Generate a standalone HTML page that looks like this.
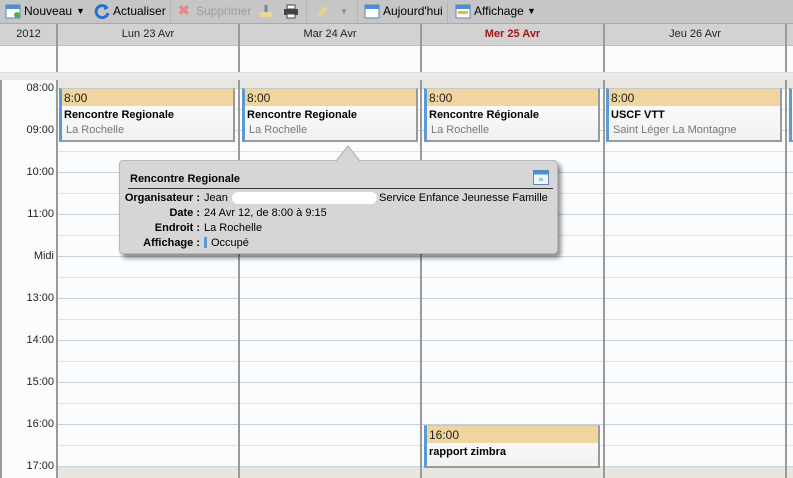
<!DOCTYPE html>
<html><head><meta charset="utf-8"><style>
*{margin:0;padding:0;box-sizing:border-box}
body{width:793px;height:478px;overflow:hidden;position:relative;background:#fafcfd;font-family:"Liberation Sans",Arial,sans-serif;font-size:12px;color:#000}
.a{position:absolute}
.tb{left:0;top:0;width:793px;height:24px;background:#c6c6c6;border-bottom:1px solid #a8a8a8}
.tb span{position:absolute;top:4px;font-size:12px}
.hd{left:0;top:24px;width:793px;height:22px;background:#d2d2d2;border-bottom:1px solid #bdbdbd}
.hd div{position:absolute;top:4px;text-align:center;font-size:11px;color:#222}
.ad{left:0;top:46px;width:793px;height:26px;background:#fbfbfb}
.sep{left:0;top:72px;width:793px;height:8px;background:#e8e8e5;border-top:1px solid #ddd}
.vl{position:absolute;width:2px;background:#9a9a9a}
.hl{position:absolute;left:57px;width:736px;height:1px;background:#c5d2da}
.hh{position:absolute;left:57px;width:736px;height:1px;background:#dde4e8}
.tl{position:absolute;left:0;width:54px;text-align:right;font-size:11px;color:#222}
.ev{position:absolute;background:linear-gradient(#fff,#f1f1f1);border-left:3px solid #5b9bd5;border-right:2px solid #9a9a9a;border-bottom:2px solid #9a9a9a;border-top:1px solid #c8c8c8}
.ev .h{height:17px;background:#f0d59f;font-size:12px;padding:2px 0 0 2px;color:#222}
.ev .t{font-weight:bold;font-size:11px;padding:3px 0 0 2px}
.ev .l{color:#777;font-size:11px;padding:3px 0 0 4px}
</style></head><body>
<div class="a tb">
 <svg class="a" style="left:5px;top:3px" width="16" height="16"><rect x="1" y="2" width="14" height="13" fill="#fff" stroke="#5a86b8"/><rect x="1" y="2" width="14" height="4" fill="#4a90d9"/><circle cx="12" cy="12" r="3" fill="#4caf50"/></svg>
 <span style="left:24px">Nouveau</span><span style="left:76px;font-size:9px;top:6px">▼</span>
 <svg class="a" style="left:94px;top:3px" width="16" height="16"><path d="M13 5A6 6 0 1 0 14 10" fill="none" stroke="#2a6fd1" stroke-width="3"/><path d="M10 2L15 5L10 7Z" fill="#2a6fd1"/></svg>
 <span style="left:113px">Actualiser</span>
 <div class="a" style="left:170px;top:2px;width:1px;height:20px;background:#b4b4b4"></div>
 <span style="left:178px;color:#e08a8a;font-size:14px;top:2px;font-weight:bold">✖</span>
 <span style="left:196px;color:#9c9c9c">Supprimer</span>
 <svg class="a" style="left:258px;top:3px" width="16" height="16"><rect x="2" y="9" width="12" height="5" fill="#e8d59a"/><path d="M8 2V9" stroke="#6a8ab0" stroke-width="3"/></svg>
 <svg class="a" style="left:283px;top:3px" width="16" height="16"><rect x="1" y="6" width="14" height="6" fill="#444"/><rect x="4" y="2" width="8" height="4" fill="#fff" stroke="#444"/><rect x="4" y="11" width="8" height="4" fill="#fff" stroke="#444"/></svg>
 <div class="a" style="left:306px;top:2px;width:1px;height:20px;background:#b4b4b4"></div>
 <svg class="a" style="left:314px;top:3px" width="16" height="16"><path d="M3 12L10 3L14 6L7 14Z" fill="#e8d090"/></svg>
 <span style="left:340px;font-size:8px;top:7px;color:#888">▼</span>
 <div class="a" style="left:357px;top:2px;width:1px;height:20px;background:#b4b4b4"></div>
 <svg class="a" style="left:364px;top:3px" width="16" height="16"><rect x="1" y="2" width="14" height="13" fill="#fff" stroke="#5a86b8"/><rect x="1" y="2" width="14" height="4" fill="#4a90d9"/></svg>
 <span style="left:383px">Aujourd'hui</span>
 <div class="a" style="left:447px;top:2px;width:1px;height:20px;background:#b4b4b4"></div>
 <svg class="a" style="left:455px;top:3px" width="16" height="16"><rect x="1" y="2" width="14" height="13" fill="#fff" stroke="#5a86b8"/><rect x="1" y="2" width="14" height="4" fill="#4a90d9"/><rect x="3" y="8" width="10" height="3" fill="#e8b830"/></svg>
 <span style="left:474px">Affichage</span><span style="left:527px;font-size:9px;top:6px">▼</span>
</div>
<div class="a hd">
 <div style="left:0;width:57px">2012</div>
 <div style="left:57px;width:182px">Lun 23 Avr</div>
 <div style="left:239px;width:182px">Mar 24 Avr</div>
 <div style="left:421px;width:183px;color:#a01818;font-weight:bold">Mer 25 Avr</div>
 <div style="left:604px;width:182px">Jeu 26 Avr</div>
</div>
<div class="a ad"></div>
<div class="a sep"></div>
<div class="a" style="left:57px;top:80px;width:736px;height:8px;background:#e8e7e2"></div>
<div class="a" style="left:57px;top:467px;width:736px;height:11px;background:#e6e5e0"></div>
<div class="a" style="left:0;top:80px;width:2px;height:398px;background:#9a9a9a"></div>

<div class="hl" style="top:88px"></div><div class="hh" style="top:109px"></div>
<div class="hl" style="top:130px"></div><div class="hh" style="top:151px"></div>
<div class="hl" style="top:172px"></div><div class="hh" style="top:193px"></div>
<div class="hl" style="top:214px"></div><div class="hh" style="top:235px"></div>
<div class="hl" style="top:256px"></div><div class="hh" style="top:277px"></div>
<div class="hl" style="top:298px"></div><div class="hh" style="top:319px"></div>
<div class="hl" style="top:340px"></div><div class="hh" style="top:361px"></div>
<div class="hl" style="top:382px"></div><div class="hh" style="top:403px"></div>
<div class="hl" style="top:424px"></div><div class="hh" style="top:445px"></div>
<div class="hl" style="top:466px"></div>

<div class="tl" style="top:82px">08:00</div>
<div class="tl" style="top:124px">09:00</div>
<div class="tl" style="top:166px">10:00</div>
<div class="tl" style="top:208px">11:00</div>
<div class="tl" style="top:250px">Midi</div>
<div class="tl" style="top:292px">13:00</div>
<div class="tl" style="top:334px">14:00</div>
<div class="tl" style="top:376px">15:00</div>
<div class="tl" style="top:418px">16:00</div>
<div class="tl" style="top:460px">17:00</div>

<div class="vl" style="left:56px;top:24px;height:48px"></div>
<div class="vl" style="left:238px;top:24px;height:48px"></div>
<div class="vl" style="left:420px;top:24px;height:48px"></div>
<div class="vl" style="left:603px;top:24px;height:48px"></div>
<div class="vl" style="left:785px;top:24px;height:48px"></div>
<div class="vl" style="left:56px;top:80px;height:398px"></div>
<div class="vl" style="left:238px;top:80px;height:398px"></div>
<div class="vl" style="left:420px;top:80px;height:398px"></div>
<div class="vl" style="left:603px;top:80px;height:398px"></div>
<div class="vl" style="left:785px;top:80px;height:398px"></div>

<div class="ev" style="left:59px;top:88px;width:176px;height:54px"><div class="h">8:00</div><div class="t">Rencontre Regionale</div><div class="l">La Rochelle</div></div>
<div class="ev" style="left:242px;top:88px;width:176px;height:54px"><div class="h">8:00</div><div class="t">Rencontre Regionale</div><div class="l">La Rochelle</div></div>
<div class="ev" style="left:424px;top:88px;width:176px;height:54px"><div class="h">8:00</div><div class="t">Rencontre Régionale</div><div class="l">La Rochelle</div></div>
<div class="ev" style="left:606px;top:88px;width:176px;height:54px"><div class="h">8:00</div><div class="t">USCF VTT</div><div class="l">Saint Léger La Montagne</div></div>
<div class="ev" style="left:789px;top:88px;width:10px;height:54px"></div>
<div class="ev" style="left:424px;top:425px;width:176px;height:43px"><div class="h">16:00</div><div class="t">rapport zimbra</div></div>

<div class="a" style="left:119px;top:160px;width:439px;height:94px;background:#d6d6d6;border:1px solid #b8b8b8;border-radius:4px;box-shadow:3px 4px 5px rgba(0,0,0,.45)"></div>
<svg class="a" style="left:336px;top:145px" width="26" height="17"><path d="M0 16L12 1L24 16" fill="#d6d6d6" stroke="#a8a8a8"/></svg>
<div class="a" style="left:130px;top:173px;font-size:11px;font-weight:bold">Rencontre Regionale</div>
<svg class="a" style="left:533px;top:170px" width="16" height="15"><rect x="0.5" y="0.5" width="15" height="14" fill="#eef4fa" stroke="#5a86b8"/><rect x="0.5" y="0.5" width="15" height="4" fill="#4a90d9"/><rect x="6" y="8" width="4" height="3" fill="#9cb"/></svg>
<div class="a" style="left:128px;top:188px;width:425px;height:1px;background:#333"></div>
<div class="a" style="left:120px;top:191px;width:80px;text-align:right;font-size:11px;font-weight:bold;line-height:15px">Organisateur :<br>Date :<br>Endroit :<br>Affichage :</div>
<div class="a" style="left:204px;top:191px;font-size:11px;line-height:15px">Jean<br>24 Avr 12, de 8:00 à 9:15<br>La Rochelle<br><span style="display:inline-block;width:3px;height:11px;background:#5b9bd5;vertical-align:-2px;margin-right:4px"></span>Occupé</div>
<div class="a" style="left:232px;top:192px;width:145px;height:12px;background:#fff;border-radius:6px"></div>
<div class="a" style="left:379px;top:191px;font-size:11px;line-height:15px">Service Enfance Jeunesse Famille</div>
</body></html>
